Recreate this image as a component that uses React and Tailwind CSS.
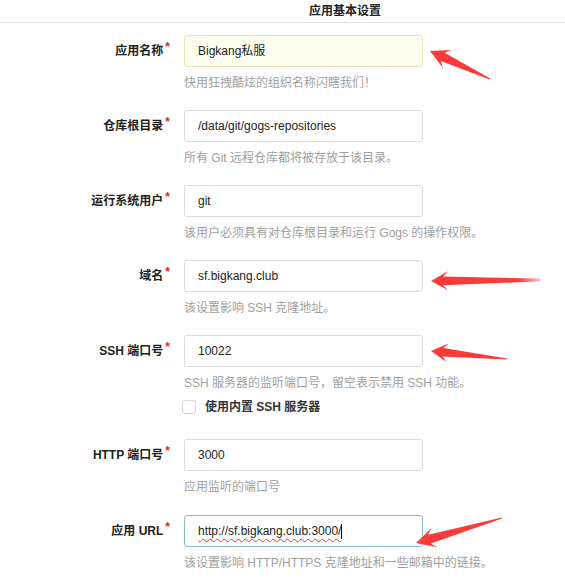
import React from "react";

function arrowPath(tx, ty, ex, ey, headLen = 17, headHalf = 8.5, neck = 3.2, tail = 0.7) {
  const dx = ex - tx;
  const dy = ey - ty;
  const len = Math.hypot(dx, dy);
  const ux = dx / len;
  const uy = dy / len;
  const nx = -uy;
  const ny = ux;
  const p = (a, b) => [tx + ux * a + nx * b, ty + uy * a + ny * b];
  const pts = [
    [tx, ty],
    p(headLen, headHalf),
    p(headLen - 5, neck),
    [ex + nx * tail, ey + ny * tail],
    [ex - nx * tail, ey - ny * tail],
    p(headLen - 5, -neck),
    p(headLen, -headHalf),
  ];
  return "M" + pts.map((q) => q[0].toFixed(1) + " " + q[1].toFixed(1)).join(" L") + " Z";
}

function Field({ label, value, help, yellow, focused, className = "" }) {
  return (
    <div className={"flex items-start " + className}>
      <div className="w-[170px] h-[32px] flex items-center justify-end font-bold text-[12px] text-[#222]">
        <span>{label}</span>
        <span className="text-[#db2828] ml-[2px] -mt-[8px] text-[12px] leading-none">*</span>
      </div>
      <div className="ml-[14px] flex flex-col">
        <div
          className={
            "w-[239px] h-[32px] rounded-[3px] border flex items-center pl-[13px] text-[12px] text-[#222] " +
            (yellow
              ? "bg-[#fefeee] border-[#e6e4b8]"
              : focused
              ? "bg-white border-[#85b7d9]"
              : "bg-white border-[#dcdcdc]")
          }
        >
          {focused ? (
            <>
              <span className="underline decoration-wavy decoration-[#e53935] decoration-[1px] underline-offset-[3px]">
                {value}
              </span>
              <span className="inline-block w-[1px] h-[15px] bg-black"></span>
            </>
          ) : (
            <span>{value}</span>
          )}
        </div>
        <div className="mt-[8px] leading-[16px] text-[12px] text-[#9e9e9e] whitespace-nowrap">{help}</div>
      </div>
    </div>
  );
}

export default function App() {
  const red = "#fb3a3a";
  return (
    <div
      className="relative w-[565px] h-[588px] bg-white overflow-hidden"
      style={{ fontFamily: '"Liberation Sans", Arial, "Noto Sans CJK SC", sans-serif' }}
    >
      <div className="h-[23px] pt-[1px] border-b border-[#e6e6e6] pl-[309px] text-[12px] font-bold leading-[21px] text-[#222]">
        应用基本设置
      </div>

      <Field
        className="mt-[12px]"
        label="应用名称"
        value="Bigkang私服"
        help="快用狂拽酷炫的组织名称闪瞎我们！"
        yellow
      />
      <Field
        className="mt-[19px]"
        label="仓库根目录"
        value="/data/git/gogs-repositories"
        help="所有 Git 远程仓库都将被存放于该目录。"
      />
      <Field
        className="mt-[19px]"
        label="运行系统用户"
        value="git"
        help="该用户必须具有对仓库根目录和运行 Gogs 的操作权限。"
      />
      <Field className="mt-[19px]" label="域名" value="sf.bigkang.club" help="该设置影响 SSH 克隆地址。" />
      <Field
        className="mt-[19px]"
        label="SSH 端口号"
        value="10022"
        help="SSH 服务器的监听端口号，留空表示禁用 SSH 功能。"
      />
      <div className="mt-[9px] h-[14px] flex items-center pl-[182px]">
        <div className="w-[14px] h-[14px] rounded-[3px] border border-[#d4d4d5] bg-white"></div>
        <span className="ml-[9px] text-[12px] font-bold text-[#333]">使用内置 SSH 服务器</span>
      </div>
      <Field className="mt-[25px]" label="HTTP 端口号" value="3000" help="应用监听的端口号" />
      <Field
        className="mt-[20px]"
        label="应用 URL"
        value="http://sf.bigkang.club:3000/"
        help="该设置影响 HTTP/HTTPS 克隆地址和一些邮箱中的链接。"
        focused
      />

      <svg className="absolute left-0 top-0 pointer-events-none" width="565" height="588" viewBox="0 0 565 588">
        <defs>
          <linearGradient id="fade" x1="431" y1="0" x2="540" y2="0" gradientUnits="userSpaceOnUse">
            <stop offset="0" stopColor={red} />
            <stop offset="0.8" stopColor={red} />
            <stop offset="1" stopColor={red} stopOpacity="0.35" />
          </linearGradient>
        </defs>
        <path d={arrowPath(430, 51, 490, 79, 19, 10, 4.6, 0.6)} fill={red} />
        <path d={arrowPath(431, 281, 540, 280, 17, 9.5, 4.4, 1.4)} fill="url(#fade)" />
        <path d={arrowPath(431, 351, 507, 359, 17, 9.5, 4.2, 0.6)} fill={red} />
        <path d={arrowPath(416, 543, 502, 518, 19, 10, 4.6, 0.6)} fill={red} />
      </svg>
    </div>
  );
}
